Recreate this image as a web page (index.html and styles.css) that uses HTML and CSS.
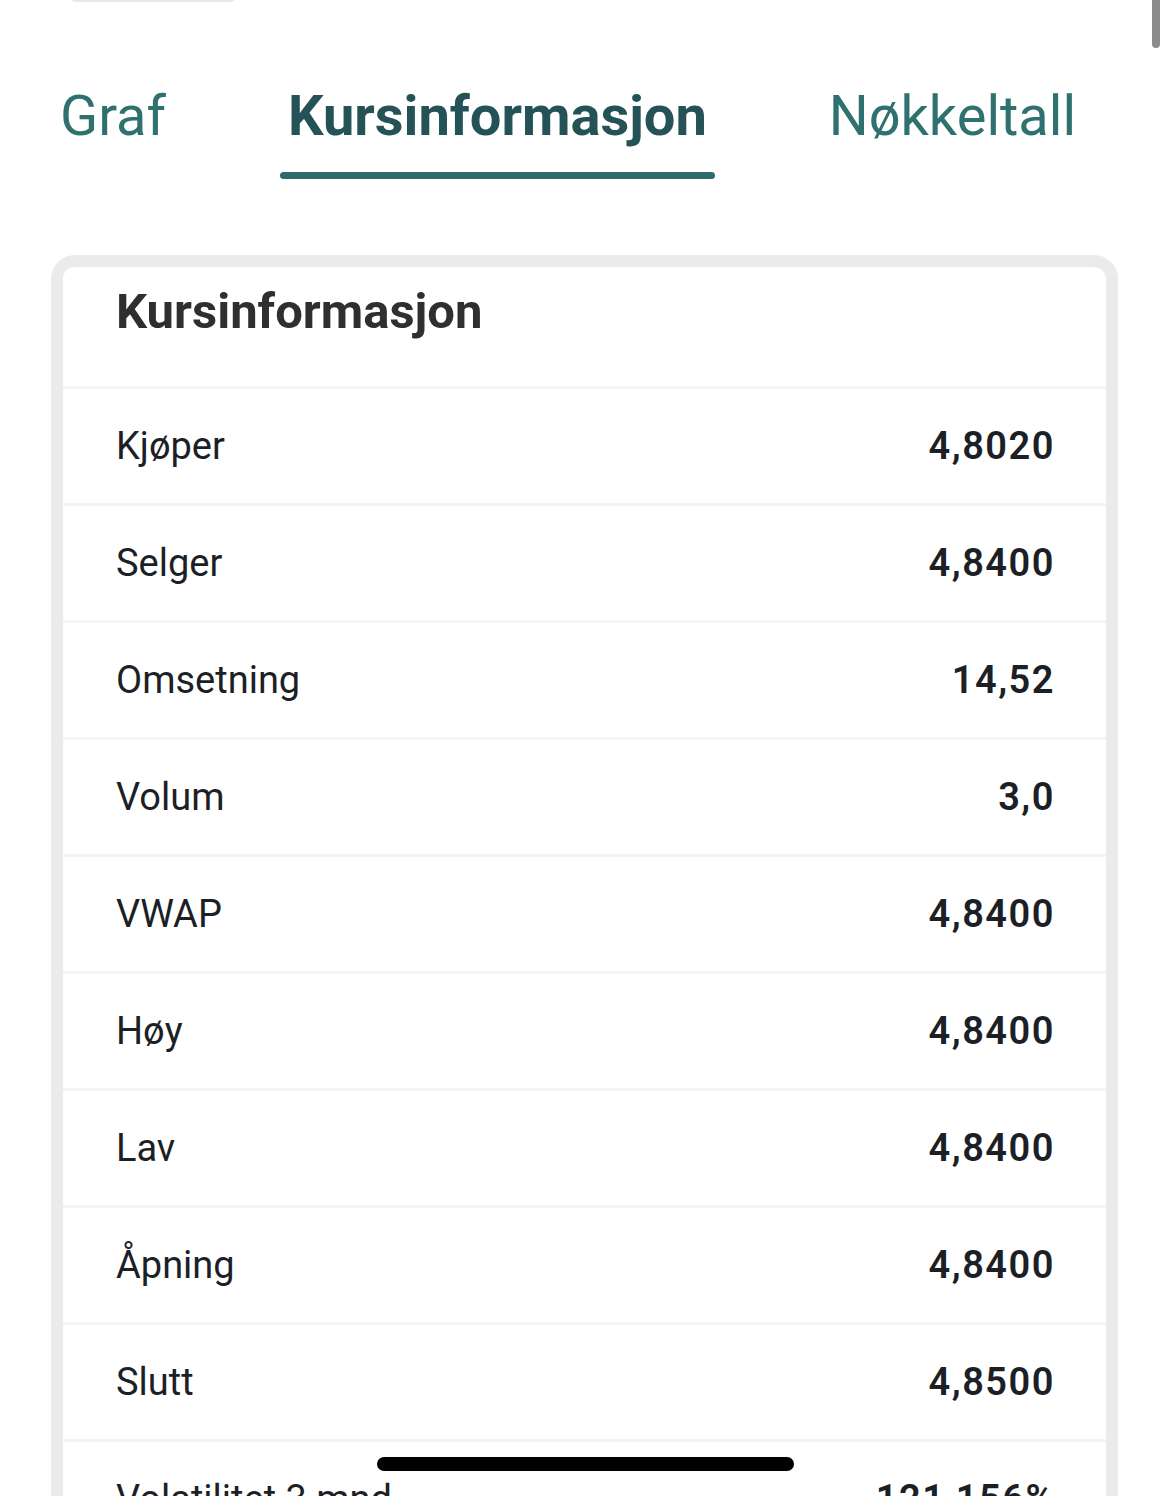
FILE: index.html
```html
<!DOCTYPE html>
<html lang="no">
<head>
  <meta charset="UTF-8" />
  <meta name="viewport" content="width=device-width, initial-scale=1.0"/>
  <title>Kursinformasjon</title>
  <link rel="stylesheet" href="styles.css">
</head>
<body>
  <div class="handle"></div>
  <div class="scrollbar"></div>

  <nav class="tabs">
    <a class="tab">Graf</a>
    <a class="tab active">Kursinformasjon</a>
    <a class="tab">Nøkkeltall</a>
  </nav>

  <section class="card">
    <h2 class="card-title">Kursinformasjon</h2>
    <div class="row"><span class="label">Kjøper</span><span class="value">4,8020</span></div>
    <div class="row"><span class="label">Selger</span><span class="value">4,8400</span></div>
    <div class="row"><span class="label">Omsetning</span><span class="value">14,52</span></div>
    <div class="row"><span class="label">Volum</span><span class="value">3,0</span></div>
    <div class="row"><span class="label">VWAP</span><span class="value">4,8400</span></div>
    <div class="row"><span class="label">Høy</span><span class="value">4,8400</span></div>
    <div class="row"><span class="label">Lav</span><span class="value">4,8400</span></div>
    <div class="row"><span class="label">Åpning</span><span class="value">4,8400</span></div>
    <div class="row"><span class="label">Slutt</span><span class="value">4,8500</span></div>
    <div class="row"><span class="label">Volatilitet 3 mnd</span><span class="value">121,156%</span></div>
  </section>

  <div class="home-indicator"></div>
</body>
</html>
```
FILE: styles.css
```css
html, body {
  margin: 0;
  height: 100%;
  overflow: hidden;
  background-color: #ffffff;
  font-family: Roboto, 'Liberation Sans', sans-serif;
  color: #1d1f27;
}

/* bits of phone chrome */
.handle {
  position: absolute;
  top: -10px;
  left: 70px;
  width: 166px;
  height: 12px;
  border-radius: 6px;
  background-color: #e8e8e8;
}

.scrollbar {
  position: absolute;
  top: -6px;
  right: 10px;
  width: 8px;
  height: 54px;
  border-radius: 4px;
  background-color: #8c8c8c;
}

.home-indicator {
  position: absolute;
  bottom: 25px;
  left: 377px;
  width: 417px;
  height: 14px;
  border-radius: 7px;
  background-color: #000;
}

/* tabs */
.tabs {
  display: flex;
  gap: 106px;
  padding: 83px 0 0 52px;
  height: 172px;
  box-sizing: border-box;
}

.tab {
  position: relative;
  display: block;
  padding: 0 8px;
  font-size: 56px;
  line-height: 67px;
  color: #2e716e;
  cursor: pointer;
}

.tab.active {
  font-weight: 700;
  color: #255257;
}

.tab.active::after {
  content: "";
  position: absolute;
  left: 0;
  right: 0;
  top: 89px;
  height: 7px;
  border-radius: 4px;
  background-color: #2e6c6b;
}

/* card */
.card {
  margin: 83px 52px 0 51px;
  border: 12px solid #ebebeb;
  border-radius: 24px;
  background-color: #fff;
}

.card-title {
  margin: 0;
  padding: 0 53px 30px;
  height: 119px;
  display: flex;
  align-items: center;
  font-size: 49px;
  font-weight: 700;
  color: #2f2f31;
  box-sizing: border-box;
}

.row {
  display: flex;
  justify-content: space-between;
  align-items: center;
  height: 117px;
  padding: 0 51px 0 53px;
  border-top: 3px solid #f4f4f4;
  box-sizing: border-box;
}

.label {
  font-size: 38px;
}

.value {
  font-size: 38px;
  font-weight: 600;
  letter-spacing: 1.5px;
}
```
